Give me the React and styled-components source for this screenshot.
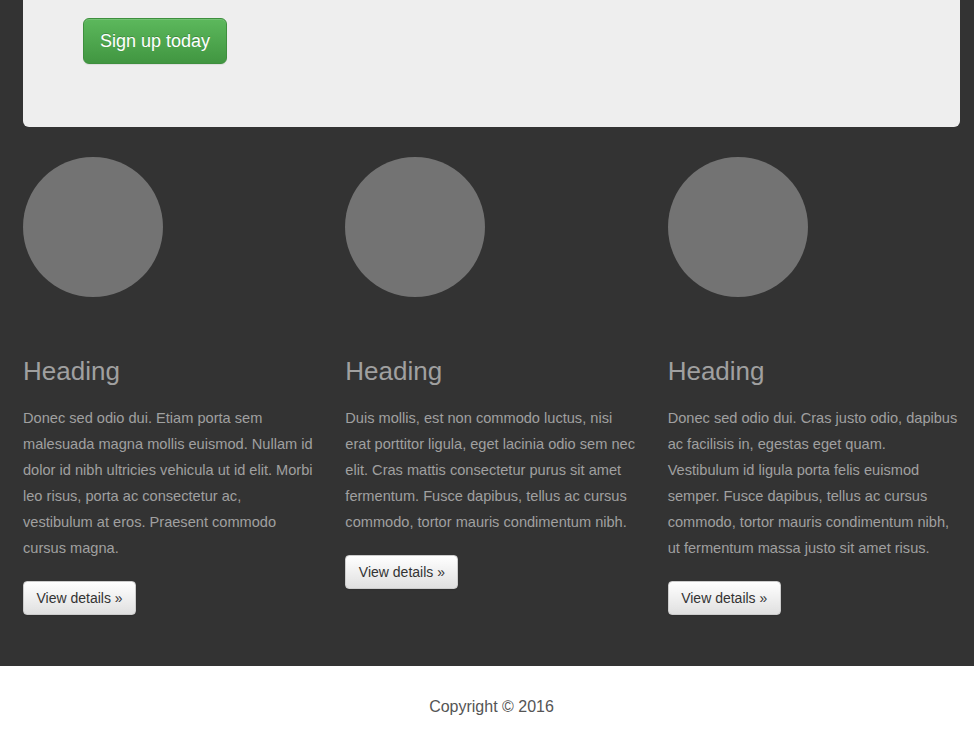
import styled, { createGlobalStyle } from 'styled-components'

const GlobalStyle = createGlobalStyle`
  body {
    margin: 0;
    background: #333333;
    font-family: "Liberation Sans", Arial, sans-serif;
  }
`

const Container = styled.div`
  width: 937px;
  margin-left: 23px;
`

const Main = styled(Container)`
  padding-bottom: 51px;
`

const Jumbotron = styled.div`
  background: #eeeeee;
  border-radius: 0 0 6px 6px;
  padding: 18px 0 48px 60px;
`

const SignUp = styled.a`
  display: inline-block;
  margin-bottom: 15px;
  padding: 10px 16px;
  font-size: 18px;
  line-height: 24px;
  color: #fff;
  text-decoration: none;
  border: 1px solid #3e8f3e;
  border-radius: 6px;
  background-image: linear-gradient(to bottom, #5cb85c 0%, #419641 100%);
  box-shadow: inset 0 1px 0 rgba(255, 255, 255, 0.15), 0 1px 1px rgba(0, 0, 0, 0.075);
  text-shadow: 0 -1px 0 rgba(0, 0, 0, 0.2);
`

const Row = styled.div`
  display: grid;
  grid-template-columns: repeat(3, 1fr);
  column-gap: 30px;
  margin-top: 30px;
  align-items: start;
`

const Col = styled.div``

const Circle = styled.div`
  width: 140px;
  height: 140px;
  border-radius: 50%;
  background: #737373;
`

const Heading = styled.h2`
  margin: 60px 0 19px;
  font-size: 26px;
  font-weight: 400;
  line-height: 29px;
  color: #a0a0a0;
`

const Text = styled.p`
  max-width: 291px;
  margin: 0 0 20px;
  font-size: 14.6px;
  line-height: 26px;
  color: #a0a0a0;
`

const Details = styled.a`
  display: inline-block;
  padding: 6px 12.5px;
  font-size: 14px;
  line-height: 20px;
  color: #333;
  text-decoration: none;
  border: 1px solid #ccc;
  border-radius: 4px;
  background-image: linear-gradient(to bottom, #ffffff 0%, #e0e0e0 100%);
  box-shadow: inset 0 1px 0 rgba(255, 255, 255, 0.15), 0 1px 1px rgba(0, 0, 0, 0.075);
`

const Footer = styled.footer`
  background: #fff;
  padding: 32px 0 30px;
`

const Copyright = styled(Container)`
  text-align: center;
  font-size: 16px;
  line-height: 18px;
  color: #555;
`

const columns = [
  'Donec sed odio dui. Etiam porta sem malesuada magna mollis euismod. Nullam id dolor id nibh ultricies vehicula ut id elit. Morbi leo risus, porta ac consectetur ac, vestibulum at eros. Praesent commodo cursus magna.',
  'Duis mollis, est non commodo luctus, nisi erat porttitor ligula, eget lacinia odio sem nec elit. Cras mattis consectetur purus sit amet fermentum. Fusce dapibus, tellus ac cursus commodo, tortor mauris condimentum nibh.',
  'Donec sed odio dui. Cras justo odio, dapibus ac facilisis in, egestas eget quam. Vestibulum id ligula porta felis euismod semper. Fusce dapibus, tellus ac cursus commodo, tortor mauris condimentum nibh, ut fermentum massa justo sit amet risus.',
]

export default function App() {
  return (
    <>
      <GlobalStyle />
      <Main>
        <Jumbotron>
          <SignUp href="#">Sign up today</SignUp>
        </Jumbotron>
        <Row>
          {columns.map((text, i) => (
            <Col key={i}>
              <Circle />
              <Heading>Heading</Heading>
              <Text>{text}</Text>
              <Details href="#">View details &raquo;</Details>
            </Col>
          ))}
        </Row>
      </Main>
      <Footer>
        <Copyright>Copyright &copy; 2016</Copyright>
      </Footer>
    </>
  )
}
